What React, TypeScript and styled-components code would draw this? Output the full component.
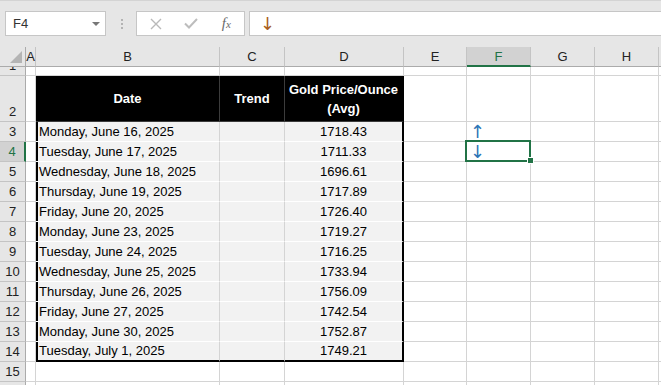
import styled, { createGlobalStyle, css } from "styled-components";

const GREEN = "#217346";
const GRID = "#d4d4d4";

const GlobalStyle = createGlobalStyle`
  html, body {
    margin: 0;
    padding: 0;
    background: #ffffff;
  }
  body {
    font-family: "Liberation Sans", Arial, sans-serif;
    overflow: hidden;
  }
`;

const Window = styled.div`
  width: 661px;
  height: 385px;
  overflow: hidden;
  display: flex;
  flex-direction: column;
  background: #ffffff;
`;

const Toolbar = styled.div`
  flex: none;
  height: 47px;
  box-sizing: border-box;
  background: #e6e6e6;
  border-top: 1px solid #d4d4d4;
  display: flex;
  align-items: flex-start;
  padding: 10px 0 0 5px;
`;

const NameBox = styled.div`
  width: 101px;
  height: 25px;
  box-sizing: border-box;
  background: #ffffff;
  border: 1px solid #c6c6c6;
  display: flex;
  align-items: center;
  justify-content: space-between;
  padding: 0 5px 0 7px;
  font-size: 13px;
  color: #333333;
`;

const Caret = styled.span`
  width: 0;
  height: 0;
  border-left: 4px solid transparent;
  border-right: 4px solid transparent;
  border-top: 4px solid #777777;
`;

const Grip = styled.div`
  width: 2px;
  height: 25px;
  margin: 0 13px 0 15px;
  display: flex;
  flex-direction: column;
  justify-content: center;
  gap: 2px;
  span {
    width: 2px;
    height: 2px;
    background: #b3b3b3;
  }
`;

const FxBox = styled.div`
  width: 109px;
  height: 25px;
  box-sizing: border-box;
  background: #ffffff;
  border: 1px solid #c6c6c6;
  display: flex;
  align-items: center;
  padding-left: 1px;
`;

const FxSlot = styled.span`
  width: 36px;
  display: flex;
  justify-content: center;
  align-items: center;
`;

const FxText = styled.span`
  font-family: "Liberation Serif", "Times New Roman", serif;
  font-style: italic;
  font-size: 15px;
  color: #6b6b6b;
  small {
    font-size: 11px;
  }
`;

const FormulaInput = styled.div`
  flex: 1;
  height: 25px;
  margin-left: 4px;
  box-sizing: border-box;
  background: #ffffff;
  border: 1px solid #c6c6c6;
  border-right: none;
  display: flex;
  align-items: center;
  padding-left: 10px;
  font-family: "DejaVu Sans", sans-serif;
  font-size: 18px;
  line-height: 22px;
  color: #a9601f;
`;

const Sheet = styled.div`
  flex: 1;
  display: flex;
  flex-direction: column;
`;

const Row = styled.div<{ $h: number }>`
  flex: none;
  display: flex;
  height: ${({ $h }) => $h}px;
`;

const Corner = styled.div`
  flex: none;
  width: 26px;
  height: 20px;
  box-sizing: border-box;
  background: #e6e6e6;
  border-right: 1px solid #ababab;
  border-bottom: 1px solid #ababab;
  display: flex;
  align-items: flex-end;
  justify-content: flex-end;
  padding: 0 3px 3px 0;
`;

const ColHeader = styled.div<{ $w: number; $active?: boolean }>`
  flex: none;
  width: ${({ $w }) => $w}px;
  height: 20px;
  box-sizing: border-box;
  background: #e6e6e6;
  border-right: 1px solid #c4c4c4;
  border-bottom: 1px solid #ababab;
  display: flex;
  align-items: center;
  justify-content: center;
  font-size: 13px;
  color: #222222;
  ${({ $active }) =>
    $active &&
    css`
      background: #d2d2d2;
      color: ${GREEN};
      border-bottom: 2px solid ${GREEN};
    `}
`;

const RowHeader = styled.div<{ $active?: boolean }>`
  flex: none;
  width: 26px;
  box-sizing: border-box;
  background: #e6e6e6;
  border-right: 1px solid #ababab;
  border-bottom: 1px solid #c4c4c4;
  display: flex;
  align-items: flex-end;
  justify-content: center;
  overflow: hidden;
  font-size: 13px;
  line-height: 19px;
  color: #222222;
  ${({ $active }) =>
    $active &&
    css`
      background: #d2d2d2;
      color: ${GREEN};
      border-right: 2px solid ${GREEN};
    `}
`;

type Kind = "plain" | "head" | "body";

const Cell = styled.div<{
  $w: number;
  $kind: Kind;
  $center?: boolean;
  $left?: boolean;
  $right?: boolean;
  $bottom?: boolean;
  $selected?: boolean;
}>`
  flex: none;
  position: relative;
  width: ${({ $w }) => $w}px;
  box-sizing: border-box;
  border-right: 1px solid ${GRID};
  border-bottom: 1px solid ${GRID};
  padding: 0 3px;
  font-size: 13px;
  line-height: 19px;
  white-space: nowrap;
  color: #000000;
  display: flex;
  align-items: flex-end;
  justify-content: ${({ $center }) => ($center ? "center" : "flex-start")};

  ${({ $kind }) =>
    $kind === "head" &&
    css`
      background: #000000;
      color: #ffffff;
      font-weight: bold;
      text-align: center;
      white-space: normal;
      align-items: center;
      justify-content: center;
      border-right-color: #3c3c3c;
      border-bottom-color: #3c3c3c;
    `}
  ${({ $kind }) =>
    $kind === "body" &&
    css`
      background: #f2f2f2;
      border-bottom-color: #ffffff;
    `}
  ${({ $left }) => $left && css`box-shadow: inset 2px 0 0 #000000;`}
  ${({ $right }) => $right && css`border-right: 2px solid #000000;`}
  ${({ $bottom }) => $bottom && css`border-bottom: 2px solid #000000;`}
  ${({ $selected }) =>
    $selected &&
    css`
      &::before {
        content: "";
        position: absolute;
        left: -2px;
        top: -2px;
        width: 66px;
        height: 22px;
        box-sizing: border-box;
        border: 2px solid ${GREEN};
        z-index: 2;
      }
      &::after {
        content: "";
        position: absolute;
        left: 60px;
        top: 15px;
        width: 7px;
        height: 7px;
        box-sizing: border-box;
        background: ${GREEN};
        border: 1px solid #ffffff;
        z-index: 3;
      }
    `}
`;

const Arrow = styled.span`
  font-family: "DejaVu Sans", sans-serif;
  color: #2e75b6;
  font-size: 18px;
  line-height: 19px;
`;

const columns = [
  { key: "A", w: 10 },
  { key: "B", w: 184 },
  { key: "C", w: 65 },
  { key: "D", w: 119 },
  { key: "E", w: 63 },
  { key: "F", w: 64 },
  { key: "G", w: 64 },
  { key: "H", w: 64 },
  { key: "I", w: 64 },
];

const data = [
  ["Monday, June 16, 2025", "1718.43"],
  ["Tuesday, June 17, 2025", "1711.33"],
  ["Wednesday, June 18, 2025", "1696.61"],
  ["Thursday, June 19, 2025", "1717.89"],
  ["Friday, June 20, 2025", "1726.40"],
  ["Monday, June 23, 2025", "1719.27"],
  ["Tuesday, June 24, 2025", "1716.25"],
  ["Wednesday, June 25, 2025", "1733.94"],
  ["Thursday, June 26, 2025", "1756.09"],
  ["Friday, June 27, 2025", "1742.54"],
  ["Monday, June 30, 2025", "1752.87"],
  ["Tuesday, July 1, 2025", "1749.21"],
];

const rowHeight = (r: number) => (r === 1 ? 9 : r === 2 ? 46 : 20);

const renderCell = (r: number, ci: number) => {
  const col = columns[ci];
  const inTable = r >= 2 && r <= 14 && ci >= 1 && ci <= 3;
  if (inTable) {
    const edges = {
      $left: ci === 1,
      $right: ci === 3,
      $bottom: r === 14,
    };
    if (r === 2) {
      const labels = ["Date", "Trend", "Gold Price/Ounce (Avg)"];
      return (
        <Cell key={col.key} $w={col.w} $kind="head" {...edges}>
          {labels[ci - 1]}
        </Cell>
      );
    }
    const [date, price] = data[r - 3];
    return (
      <Cell key={col.key} $w={col.w} $kind="body" $center={ci === 3} {...edges}>
        {ci === 1 ? date : ci === 3 ? price : null}
      </Cell>
    );
  }
  const selected = r === 4 && col.key === "F";
  let content = null;
  if (col.key === "F" && r === 3) content = <Arrow>↑</Arrow>;
  if (selected) content = <Arrow>↓</Arrow>;
  return (
    <Cell key={col.key} $w={col.w} $kind="plain" $selected={selected}>
      {content}
    </Cell>
  );
};

const rows = Array.from({ length: 16 }, (_, i) => i + 1);

export default function App() {
  return (
    <>
      <GlobalStyle />
      <Window>
        <Toolbar>
          <NameBox>
            F4
            <Caret />
          </NameBox>
          <Grip>
            <span />
            <span />
            <span />
          </Grip>
          <FxBox>
            <FxSlot>
              <svg width="12" height="12" viewBox="0 0 12 12">
                <path d="M1 1 L11 11 M11 1 L1 11" stroke="#b9b9b9" strokeWidth="1.4" fill="none" />
              </svg>
            </FxSlot>
            <FxSlot>
              <svg width="14" height="11" viewBox="0 0 14 11">
                <path d="M1 5.5 L5 9.5 L13 1" stroke="#bdbdbd" strokeWidth="2" fill="none" />
              </svg>
            </FxSlot>
            <FxSlot>
              <FxText>
                f<small>x</small>
              </FxText>
            </FxSlot>
          </FxBox>
          <FormulaInput>↓</FormulaInput>
        </Toolbar>
        <Sheet>
          <Row $h={20}>
            <Corner>
              <svg width="12" height="12" viewBox="0 0 12 12">
                <polygon points="12,0 12,12 0,12" fill="#b4b4b4" />
              </svg>
            </Corner>
            {columns.map((c) => (
              <ColHeader key={c.key} $w={c.w} $active={c.key === "F"}>
                {c.key === "I" ? null : c.key}
              </ColHeader>
            ))}
          </Row>
          {rows.map((r) => (
            <Row key={r} $h={rowHeight(r)}>
              <RowHeader $active={r === 4}>{r < 16 ? r : null}</RowHeader>
              {columns.map((_, ci) => renderCell(r, ci))}
            </Row>
          ))}
        </Sheet>
      </Window>
    </>
  );
}
